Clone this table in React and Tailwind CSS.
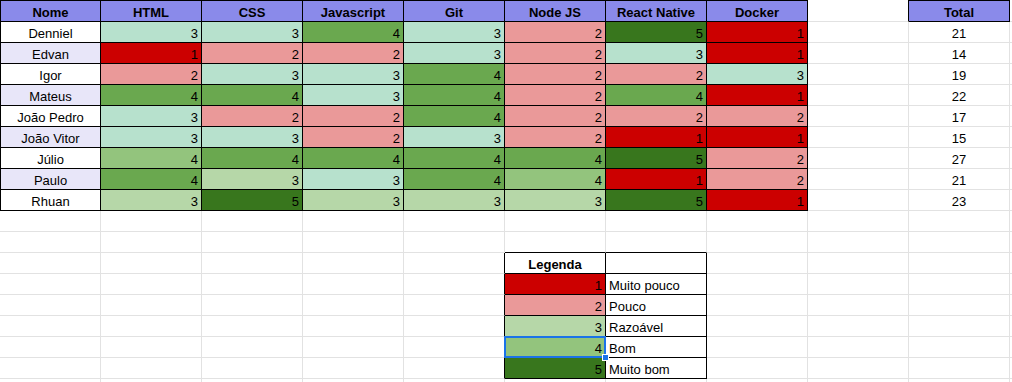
import React from "react";

// cores da escala 1..5 (as do Google Sheets)
const BG = {
  "1": "bg-[#cc0000]",
  "2": "bg-[#ea9999]",
  "3m": "bg-[#b7e1cd]",
  "3g": "bg-[#b6d7a8]",
  "4l": "bg-[#93c47d]",
  "4": "bg-[#6aa84f]",
  "5": "bg-[#38761d]",
};

const HEAD = ["Nome", "HTML", "CSS", "Javascript", "Git", "Node JS", "React Native", "Docker"];

const ALUNOS = [
  ["Denniel", "3m 3m 4 3m 2 5 1"],
  ["Edvan", "1 2 2 3m 2 3m 1"],
  ["Igor", "2 3m 3m 4 2 2 3m"],
  ["Mateus", "4 4 3m 4 2 4 1"],
  ["João Pedro", "3m 2 2 4 2 2 2"],
  ["João Vitor", "3m 3m 2 3m 2 1 1"],
  ["Júlio", "4l 4 4 4 4 5 2"],
  ["Paulo", "4 3g 3m 4 4l 1 2"],
  ["Rhuan", "3g 5 3g 3g 3g 5 1"],
];

const LEGENDA = [
  ["1", "1", "Muito pouco"],
  ["2", "2", "Pouco"],
  ["3", "3g", "Razoável"],
  ["4", "4l", "Bom"],
  ["5", "5", "Muito bom"],
];

const COLS = 11;
const ROWS = 19;

function buildSheet() {
  const grid = Array.from({ length: ROWS }, () =>
    Array.from({ length: COLS }, () => ({ text: "", bg: "", align: "left", bold: false, box: false }))
  );

  HEAD.forEach((h, c) => {
    grid[0][c] = { text: h, bg: "bg-[#8a8aea]", align: "center", bold: true, box: true };
  });
  grid[0][9] = { text: "Total", bg: "bg-[#8a8aea]", align: "center", bold: true, box: true };

  ALUNOS.forEach(([nome, notas], i) => {
    const r = i + 1;
    const vals = notas.split(" ");
    grid[r][0] = { text: nome, bg: i % 2 ? "bg-[#e8e6f9]" : "bg-white", align: "center", bold: false, box: true };
    let total = 0;
    vals.forEach((v, j) => {
      total += parseInt(v, 10);
      grid[r][j + 1] = { text: v[0], bg: BG[v], align: "right", bold: false, box: true };
    });
    grid[r][9] = { text: String(total), bg: "", align: "center", bold: false, box: false };
  });

  grid[12][5] = { text: "Legenda", bg: "bg-white", align: "center", bold: true, box: true };
  grid[12][6] = { text: "", bg: "bg-white", align: "left", bold: false, box: true };
  LEGENDA.forEach(([n, cor, label], i) => {
    grid[13 + i][5] = { text: n, bg: BG[cor], align: "right", bold: false, box: true, selected: n === "4" };
    grid[13 + i][6] = { text: label, bg: "bg-white", align: "left", bold: false, box: true };
  });

  return grid;
}

const Cell = ({ cell, first, right, bottom, left, top }) => {
  const align =
    cell.align === "right" ? "justify-end pr-[3px]" : cell.align === "center" ? "justify-center" : "justify-start pl-[3px]";
  return (
    <div
      className={`relative flex items-end pb-[2px] ${first ? "h-[22px]" : "h-[21px]"} overflow-visible whitespace-nowrap border-r border-b ${
        right ? "border-r-black" : "border-r-[#e2e2e2]"
      } ${bottom ? "border-b-black" : "border-b-[#e2e2e2]"} ${left ? "border-l border-l-black" : ""} ${
        top ? "border-t border-t-black" : ""
      } ${cell.bg} ${align} ${cell.bold ? "font-bold" : ""}`}
    >
      <span className="leading-[13px]">{cell.text}</span>
      {cell.selected && (
        <>
          <div className="absolute -left-px -top-px -right-px -bottom-px border-2 border-[#1a73e8] z-10" />
          <div className="absolute -right-[4px] -bottom-[4px] w-[7px] h-[7px] bg-[#1a73e8] border border-white z-20" />
        </>
      )}
    </div>
  );
};

export default function App() {
  const grid = buildSheet();

  return (
    <div className="w-[1012px] h-[382px] overflow-hidden bg-white text-black text-[13px] font-['Liberation_Sans',Arial,sans-serif]">
      <div className="grid grid-cols-[repeat(11,101px)]">
        {grid.map((row, r) =>
          row.map((cell, c) => {
            const rightN = c + 1 < COLS && grid[r][c + 1].box;
            const belowN = r + 1 < ROWS && grid[r + 1][c].box;
            return (
              <Cell
                key={`${r}-${c}`}
                cell={cell}
                first={r === 0}
                right={cell.box || rightN}
                bottom={cell.box || belowN}
                left={c === 0 && cell.box}
                top={r === 0 && cell.box}
              />
            );
          })
        )}
      </div>
    </div>
  );
}
